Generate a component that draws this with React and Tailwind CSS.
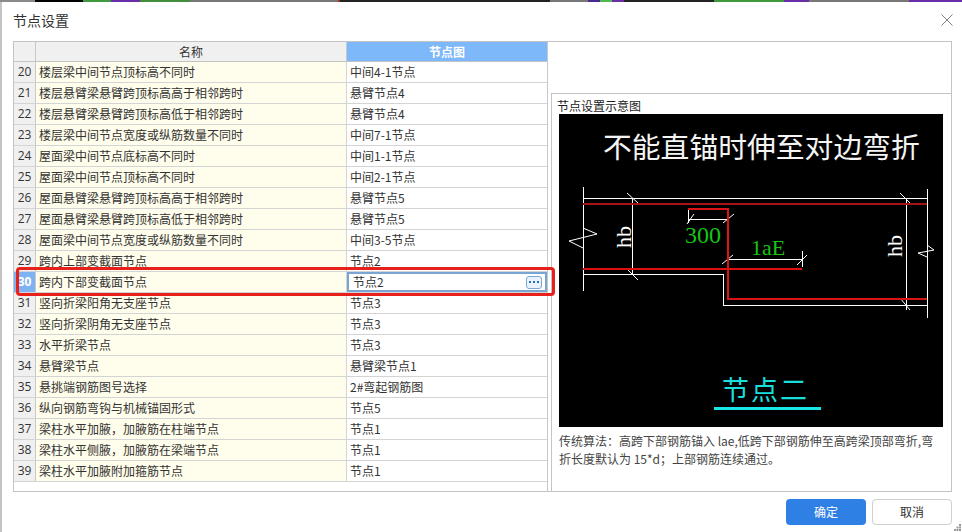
const FONT = { fontFamily: '"Noto Sans CJK SC", sans-serif' };
const rows = [
  [20, "楼层梁中间节点顶标高不同时", "中间4-1节点"],
  [21, "楼层悬臂梁悬臂跨顶标高高于相邻跨时", "悬臂节点4"],
  [22, "楼层悬臂梁悬臂跨顶标高低于相邻跨时", "悬臂节点4"],
  [23, "楼层梁中间节点宽度或纵筋数量不同时", "中间7-1节点"],
  [24, "屋面梁中间节点底标高不同时", "中间1-1节点"],
  [25, "屋面梁中间节点顶标高不同时", "中间2-1节点"],
  [26, "屋面悬臂梁悬臂跨顶标高高于相邻跨时", "悬臂节点5"],
  [27, "屋面悬臂梁悬臂跨顶标高低于相邻跨时", "悬臂节点5"],
  [28, "屋面梁中间节点宽度或纵筋数量不同时", "中间3-5节点"],
  [29, "跨内上部变截面节点", "节点2"],
  [30, "跨内下部变截面节点", "节点2"],
  [31, "竖向折梁阳角无支座节点", "节点3"],
  [32, "竖向折梁阴角无支座节点", "节点3"],
  [33, "水平折梁节点", "节点3"],
  [34, "悬臂梁节点", "悬臂梁节点1"],
  [35, "悬挑端钢筋图号选择", "2#弯起钢筋图"],
  [36, "纵向钢筋弯钩与机械锚固形式", "节点5"],
  [37, "梁柱水平加腋，加腋筋在柱端节点", "节点1"],
  [38, "梁柱水平侧腋，加腋筋在梁端节点", "节点1"],
  [39, "梁柱水平加腋附加箍筋节点", "节点1"],
];

function Row({ n, name, value }) {
  const sel = n === 30;
  return (
    <div className="flex h-[21px] border-b border-[#d4d4d4] text-[12px] leading-[20px] text-[#333]">
      <div
        className={
          "w-[22px] shrink-0 border-r border-[#c8c8c8] text-center text-[12px] " +
          (sel ? "bg-[#7fb2f2] font-bold text-white" : "bg-[#f0f0f0]")
        }
        style={{ fontFamily: '"Open Sans", sans-serif' }}
      >
        {n}
      </div>
      <div className="w-[311px] shrink-0 border-r border-[#d4d4d4] bg-[#fffdeb] pl-[3px]">{name}</div>
      {sel ? (
        <div className="flex flex-1 items-center justify-between border-2 border-[#79a5d2] bg-white pl-[4px] pr-[3px] leading-[16px]">
          <span>{value}</span>
          <span className="flex h-[13px] w-[16px] items-center justify-center gap-[2px] rounded-[3px] border border-[#7aa7d6] bg-[#eaf3fc]">
            <i className="h-[2px] w-[2px] bg-[#2b6cb8]" />
            <i className="h-[2px] w-[2px] bg-[#2b6cb8]" />
            <i className="h-[2px] w-[2px] bg-[#2b6cb8]" />
          </span>
        </div>
      ) : (
        <div className="flex-1 pl-[3px]">{value}</div>
      )}
    </div>
  );
}

function Diagram() {
  const W = "#ffffff";
  return (
    <svg viewBox="559 114 384 313" className="block h-[313px] w-[384px] bg-black">
      <text x="603" y="158" fill="#f4f4f4" fontSize="28.8" style={FONT}>不能直锚时伸至对边弯折</text>
      <g stroke={W} strokeWidth="1" fill="none" shapeRendering="crispEdges">
        <path d="M583.5 187V291M583 198.5H927.5M927.5 189V318M632.5 198V274M906.5 198V310" />
        <path d="M583 274.5H723.5V305.5H927" />
        <path d="M688 219.5H728M688.5 210V223M728 259.5H802M802.5 251V267" />
      </g>
      <g stroke={W} strokeWidth="1" fill="none">
        <path d="M627 193L638 203M900 193L910 203M627 269L638 280M900 298L910 310" />
        <path d="M687 224L694 214M723 223L734 214M722 264L733 255M797 265L807 255" />
        <path d="M583 228L597 234L569 241L583 248M927 245L934 250L918 253L927 257" />
      </g>
      <g fill="none" shapeRendering="crispEdges">
        <path d="M583 204H927" stroke="#a51414" strokeWidth="2" />
        <path d="M583 269H802" stroke="#e01010" strokeWidth="2" />
        <path d="M688 209H728V299H927" stroke="#d81414" strokeWidth="2" />
      </g>
      <text x="685" y="243" fill="#16c516" fontSize="24" style={{ fontFamily: '"Liberation Serif", serif' }}>300</text>
      <text x="751" y="255" fill="#16c516" fontSize="22" style={{ fontFamily: '"Liberation Serif", serif' }}>1aE</text>
      <text transform="translate(631 248) rotate(-90)" fill={W} fontSize="22" style={{ fontFamily: '"Liberation Serif", serif' }}>hb</text>
      <text transform="translate(902 257) rotate(-90)" fill={W} fontSize="22" style={{ fontFamily: '"Liberation Serif", serif' }}>hb</text>
      <text x="722" y="400" fill="#19dede" fontSize="27" letterSpacing="2" style={FONT}>节点二</text>
      <rect x="714" y="407" width="107" height="3" fill="#19e6e6" />
    </svg>
  );
}

export default function App() {
  return (
    <div className="relative flex h-[532px] w-[962px] flex-col overflow-hidden bg-white text-[#333]" style={FONT}>
      <div className="flex h-[2px] shrink-0 bg-[#6a6a6a]">
        <div className="w-[35px] bg-[#8a8a8a]" />
        <div className="w-[48px] bg-black" />
        <div className="w-[28px] bg-[#3f9a3f]" />
        <div className="w-[29px] bg-[#6a2fa8]" />
        <div className="w-[50px] bg-[#3f8f3f]" />
        <div className="w-[148px] bg-[#777]" />
        <div className="w-[2px] bg-[#b03020]" />
        <div className="w-[210px] bg-[#222]" />
        <div className="w-[38px] bg-[#777]" />
        <div className="w-[12px] bg-[#4a2a90]" />
        <div className="w-[12px] bg-[#4fb84f]" />
        <div className="w-[12px] bg-[#6a2fa8]" />
        <div className="w-[90px] bg-[#222]" />
        <div className="w-[70px] bg-[#3f9a3f]" />
        <div className="w-[25px] bg-[#6a2fa8]" />
        <div className="w-[100px] bg-[#777]" />
        <div className="flex-1 bg-[#6a2fa8]" />
      </div>
      <div className="flex flex-1 border-l-2 border-[#c4c4c4]">
        <div className="flex flex-1 flex-col pl-[11px] pr-[10px]">
          <div className="flex h-[39px] shrink-0 items-center justify-between pb-[1px]">
            <span className="relative top-[-1px] text-[14px] leading-[20px] text-[#333]">节点设置</span>
            <svg width="12" height="12" viewBox="0 0 12 12" className="relative top-[-1px] mr-[-1px]">
              <path d="M.5.5L11.5 11.5M11.5.5L.5 11.5" stroke="#808080" fill="none" />
            </svg>
          </div>
          <div className="flex h-[451px] shrink-0 border border-[#c4c4c4]">
            <div className="flex w-[534px] shrink-0 flex-col border-r border-[#c8c8c8]">
              <div className="flex h-[20px] shrink-0 border-b border-[#c4c4c4] text-[12px] leading-[19px]">
                <div className="w-[22px] shrink-0 border-r border-[#c8c8c8] bg-[#f0f0f0]" />
                <div className="w-[311px] shrink-0 border-r border-[#c8c8c8] bg-[#f0f0f0] text-center">名称</div>
                <div className="flex-1 bg-[#7db8fa] text-center font-bold text-white">节点图</div>
              </div>
              {rows.map((r) => (
                <Row key={r[0]} n={r[0]} name={r[1]} value={r[2]} />
              ))}
            </div>
            <div className="flex flex-1 flex-col justify-end pl-[3px]">
              <div className="h-[398px] border-l border-t border-[#c4c4c4] pl-[7px] pt-[4px]">
                <div className="ml-[-2px] text-[12px] leading-[16px] text-[#222]">节点设置示意图</div>
                <Diagram />
                <p className="mt-[5px] w-[378px] text-[12px] leading-[18px] text-[#444]">
                  传统算法：高跨下部钢筋锚入 lae,低跨下部钢筋伸至高跨梁顶部弯折,弯折长度默认为 15*d；上部钢筋连续通过。
                </p>
              </div>
            </div>
          </div>
          <div className="flex flex-1 items-start justify-end gap-[6px] pt-[7px]">
            <button className="h-[26px] w-[80px] rounded-[4px] bg-[#2f80e4] text-[12px] text-white">确定</button>
            <button className="h-[26px] w-[80px] rounded-[4px] border border-[#d0d0d0] bg-white text-[12px] text-[#333]">取消</button>
          </div>
        </div>
      </div>
      {/* red highlight annotation */}
      <div className="pointer-events-none absolute left-[16px] top-[267px] h-[29px] w-[539px] rounded-[4px] border-[3px] border-[#e8201c]" />
      {/* resize grip */}
      <svg width="7" height="7" viewBox="0 0 7 7" className="absolute bottom-[1px] right-[1px]">
        <path d="M5 0h2v2H5zM2.500 2.500h2v2h-2zM5 2.500h2v2H5zM0 5h2v2H0zM2.500 5h2v2h-2zM5 5h2v2H5z" fill="#999" />
      </svg>
    </div>
  );
}
